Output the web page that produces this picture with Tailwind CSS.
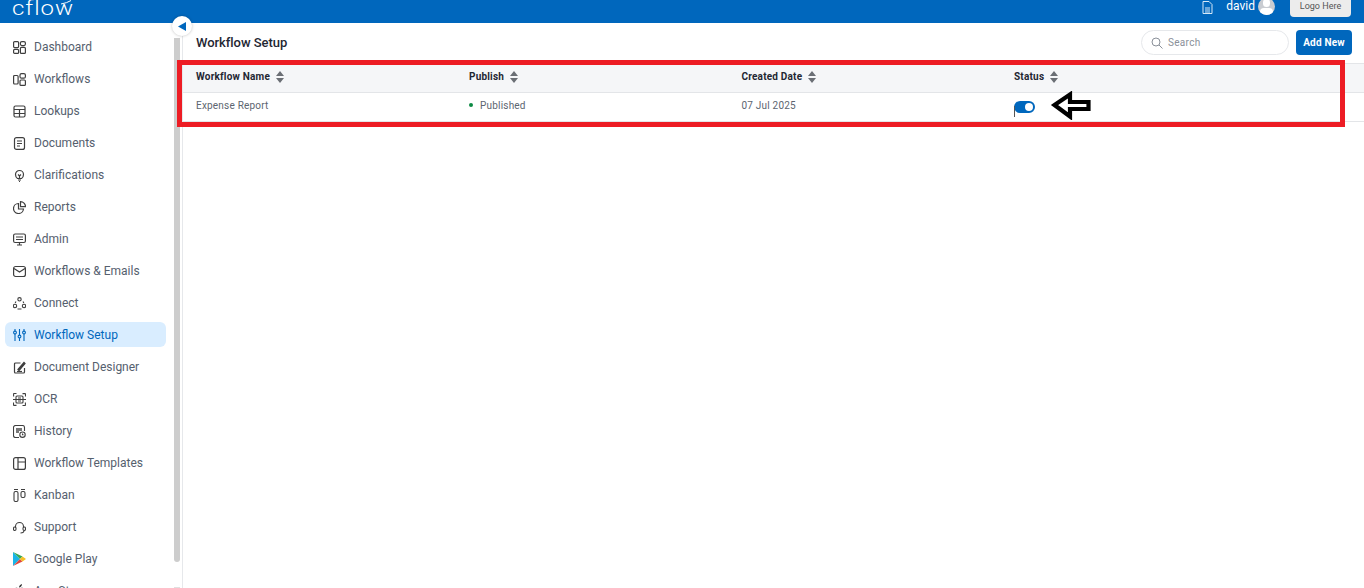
<!DOCTYPE html>
<html><head><meta charset="utf-8">
<script src="https://cdn.jsdelivr.net/npm/@tailwindcss/browser@4"></script>
</head>
<body class="m-0 bg-white">
<div class="relative w-[1364px] h-[588px] overflow-hidden bg-white font-['Roboto',sans-serif] flex flex-col">
  <header class="h-[23px] shrink-0 bg-[#0067bd] flex items-start overflow-hidden relative">
    <div class="ml-[12px] -mt-[2px] text-white text-[20px] leading-[20px] font-light tracking-[0.8px] scale-x-[1.2] origin-left">cflow</div>
    <svg class="absolute left-[60px] top-[0px]" width="12" height="5" viewBox="0 0 12 5" fill="none" stroke="#fff" stroke-width="1"><path d="M1 4 Q7 3 11 0.5"/></svg>
    <div class="ml-auto flex items-start">
      <svg class="mr-[13px] mt-[1px]" width="11" height="13" viewBox="0 0 11 13" fill="none" stroke="#d6e8f7" stroke-width="1"><path d="M1 .5h6l3 3v9H1z"/><path d="M3 7h5M3 9h5M3 11h5"/></svg>
      <div class="text-white text-[12px] leading-[13px] mr-[3px]">david</div>
      <div class="w-[17px] h-[17px] -mt-[2px] mr-[15px] rounded-full bg-[#c9ccd1] overflow-hidden relative">
        <div class="absolute left-[5px] top-[1px] w-[7px] h-[8px] rounded-full bg-white"></div>
        <div class="absolute left-[2px] top-[10px] w-[13px] h-[8px] rounded-full bg-white"></div>
      </div>
      <div class="w-[61px] h-[17px] mr-[13px] bg-[#ececec] rounded-b-[4px] text-[9px] leading-[13px] text-[#555] text-center">Logo Here</div>
    </div>
  </header>
  <div class="flex flex-1 min-h-0 relative">
    <aside class="w-[183px] shrink-0 border-r border-[#e6e8eb] relative overflow-hidden pt-[8px] pl-[5px]">
      <nav class="w-[161px] flex flex-col text-[12px] text-[#55606e]">
        <a class="h-[32px] flex items-center pl-[8px] gap-[8px]">
          <svg width="13" height="13" viewBox="0 0 13 13" fill="none" stroke="#3f3f3f" stroke-width="1.200"><rect x=".6" y=".6" width="5" height="6" rx="1"/><rect x="7.400" y=".6" width="5" height="4" rx="1.500"/><rect x=".6" y="8.400" width="5" height="4" rx="1"/><rect x="7.400" y="6.400" width="5" height="6" rx="1"/></svg>
          <span>Dashboard</span></a>
        <a class="h-[32px] flex items-center pl-[8px] gap-[8px]">
          <svg width="13" height="13" viewBox="0 0 13 13" fill="none" stroke="#3f3f3f" stroke-width="1.200"><rect x=".6" y="2.500" width="4.500" height="8.500" rx="1"/><rect x="7" y=".6" width="5.400" height="4.600" rx="1.500"/><rect x="7" y="7" width="5.400" height="5.400" rx="1"/></svg>
          <span>Workflows</span></a>
        <a class="h-[32px] flex items-center pl-[8px] gap-[8px]">
          <svg width="13" height="13" viewBox="0 0 13 13" fill="none" stroke="#3f3f3f" stroke-width="1.200"><rect x="1" y="1" width="11" height="11" rx="1.500"/><path d="M1 4.500h11M1 8.500h11M6.500 4.500v7.500"/></svg>
          <span>Lookups</span></a>
        <a class="h-[32px] flex items-center pl-[8px] gap-[8px]">
          <svg width="13" height="13" viewBox="0 0 13 13" fill="none" stroke="#3f3f3f" stroke-width="1.200"><rect x="1.500" y=".6" width="10" height="11.800" rx="2"/><path d="M4 4h5M4 6.500h5M4 9h3"/></svg>
          <span>Documents</span></a>
        <a class="h-[32px] flex items-center pl-[8px] gap-[8px]">
          <svg width="13" height="13" viewBox="0 0 13 13" fill="none" stroke="#3f3f3f" stroke-width="1.200"><path d="M4.500 9.500C3 8.500 2.500 7 2.500 5.500a4 4 0 0 1 8 0c0 1.500-.5 3-2 4z"/><path d="M5 11h3M6 12.500h1M5 5.500l1.500 1.500L8 5.500M6.500 7v2.500"/></svg>
          <span>Clarifications</span></a>
        <a class="h-[32px] flex items-center pl-[8px] gap-[8px]">
          <svg width="13" height="13" viewBox="0 0 13 13" fill="none" stroke="#3f3f3f" stroke-width="1.200"><path d="M5.500 2.500a5 5 0 1 0 5 5.500h-5z"/><path d="M7.500 .6a5 5 0 0 1 5 5h-5z"/></svg>
          <span>Reports</span></a>
        <a class="h-[32px] flex items-center pl-[8px] gap-[8px]">
          <svg width="13" height="13" viewBox="0 0 13 13" fill="none" stroke="#3f3f3f" stroke-width="1.200"><rect x=".6" y="1" width="11.800" height="8.500" rx="1.500"/><path d="M3 4h7M3 6.500h7M4 12h5M6.500 9.500V12"/></svg>
          <span>Admin</span></a>
        <a class="h-[32px] flex items-center pl-[8px] gap-[8px]">
          <svg width="13" height="13" viewBox="0 0 13 13" fill="none" stroke="#3f3f3f" stroke-width="1.200"><rect x=".6" y="1.500" width="11.800" height="10" rx="2"/><path d="M1 3.500l5.500 3.500L12 3.500"/></svg>
          <span>Workflows &amp; Emails</span></a>
        <a class="h-[32px] flex items-center pl-[8px] gap-[8px]">
          <svg width="13" height="13" viewBox="0 0 13 13" fill="none" stroke="#3f3f3f" stroke-width="1.100"><circle cx="6.500" cy="2.300" r="1.700"/><circle cx="2" cy="9" r="1.700"/><circle cx="11" cy="9" r="1.700"/><path d="M3 4.500l-.8 1.500M10 4.500l.8 1.500M4.500 12h4"/></svg>
          <span>Connect</span></a>
        <a class="h-[25px] mt-[3px] mb-[4px] flex items-center pl-[8px] gap-[8px] bg-[#d9edff] rounded-[6px] text-[#0067bd]">
          <svg width="13" height="13" viewBox="0 0 13 13" fill="none" stroke="#0067bd" stroke-width="1.100"><path d="M2 1v2M2 6v7M6.500 1v6M6.500 10v3M11 1v2M11 6v7"/><circle cx="2" cy="4.500" r="1.400"/><circle cx="6.500" cy="8.500" r="1.400"/><circle cx="11" cy="4.500" r="1.400"/></svg>
          <span>Workflow Setup</span></a>
        <a class="h-[32px] flex items-center pl-[8px] gap-[8px]">
          <svg width="13" height="13" viewBox="0 0 13 13" fill="none" stroke="#3f3f3f" stroke-width="1.200"><path d="M11.500 7v4a1 1 0 0 1-1 1h-8a1 1 0 0 1-1-1V3a1 1 0 0 1 1-1h5"/><path d="M5 8.500L11 1.500l1 1L6 9.500z" fill="#3f3f3f"/><path d="M4 10.500h5"/></svg>
          <span>Document Designer</span></a>
        <a class="h-[32px] flex items-center pl-[8px] gap-[8px]">
          <svg width="13" height="13" viewBox="0 0 13 13" fill="none" stroke="#3f3f3f" stroke-width="1.100"><path d="M.6 3.500V1a.5.5 0 0 1 .5-.5h2.400M9.500.6H12a.5.5 0 0 1 .5.5v2.400M12.400 9.500V12a.5.5 0 0 1-.5.5H9.500M3.500 12.400H1a.5.5 0 0 1-.5-.5V9.500"/><rect x="3" y="3" width="7" height="7" rx="1"/><path d="M0 6.500h13M5 5h3M5 8h3"/></svg>
          <span>OCR</span></a>
        <a class="h-[32px] flex items-center pl-[8px] gap-[8px]">
          <svg width="13" height="13" viewBox="0 0 13 13" fill="none" stroke="#3f3f3f" stroke-width="1.100"><path d="M6 12.500H2.500a2 2 0 0 1-2-2v-8a2 2 0 0 1 2-2h7a2 2 0 0 1 2 2V6"/><path d="M3 3h6v3H6v2H3z" fill="#777" stroke="none"/><circle cx="9.500" cy="9.700" r="2.700"/><path d="M9.500 8.500v1.300h1"/></svg>
          <span>History</span></a>
        <a class="h-[32px] flex items-center pl-[8px] gap-[8px]">
          <svg width="13" height="13" viewBox="0 0 13 13" fill="none" stroke="#3f3f3f" stroke-width="1.200"><rect x=".6" y=".6" width="11.800" height="11.800" rx="2"/><path d="M5 .6v11.800M5 5h7.400"/></svg>
          <span>Workflow Templates</span></a>
        <a class="h-[32px] flex items-center pl-[8px] gap-[8px]">
          <svg width="13" height="13" viewBox="0 0 13 13" fill="none" stroke="#3f3f3f" stroke-width="1.100"><path d="M1 .5h4M8 .5h4"/><rect x="1" y="2.500" width="4" height="10" rx="1.500"/><rect x="8" y="2.500" width="4" height="6" rx="1.500"/></svg>
          <span>Kanban</span></a>
        <a class="h-[32px] flex items-center pl-[8px] gap-[8px]">
          <svg width="13" height="13" viewBox="0 0 13 13" fill="none" stroke="#3f3f3f" stroke-width="1.100"><path d="M2.500 6.500V5.500a4 4 0 0 1 8 0v1"/><rect x=".5" y="6" width="2.500" height="3.500" rx="1.200"/><rect x="10" y="6" width="2.500" height="3.500" rx="1.200"/><path d="M11 9.500c0 1.500-1.500 2.500-3.500 2.500"/></svg>
          <span>Support</span></a>
        <a class="h-[32px] flex items-center pl-[8px] gap-[8px]">
          <svg width="13" height="14" viewBox="0 0 13 14"><path d="M0 0v14l7-7z" fill="#19b5e8"/><path d="M0 0l7 7 2.500-2.500z" fill="#36a853"/><path d="M0 14l7-7 2.500 2.500z" fill="#e0483e"/><path d="M9.500 4.500L13 7l-3.500 2.500L7 7z" fill="#f6c026"/></svg>
          <span>Google Play</span></a>
        <a class="h-[32px] flex items-center pl-[8px] gap-[8px]">
          <svg width="13" height="14" viewBox="0 0 13 14" fill="#333"><path d="M9 0C9 2 7.500 3.500 6 3.500 6 2 7.500.3 9 0zM6 4.500c1 0 1.500-.7 3-.7 1.200 0 2.300.6 3 1.700-2.500 1.500-2 5 .7 6-.8 1.500-2 3-3.200 3-1 0-1.500-.7-2.700-.7-1.300 0-1.800.7-2.800.7C2 14.500 0 10.500 0 8c0-2.500 1.800-4.200 3.500-4.200 1 0 1.700.7 2.500.7z"/></svg>
          <span>App Store</span></a>
      </nav>
      <div class="absolute left-[174px] top-[15px] w-[6px] h-[524px] bg-[#cdcdcd] rounded-b-[3px]"></div>
      <div class="absolute left-[174px] top-[564px] w-[6px] h-[4px] bg-[#e0e0e0]"></div>
    </aside>
    <main class="flex-1 min-w-0">
      <div class="h-[40px] pl-[13px] pr-[12px] flex items-center">
        <h1 class="text-[13px] font-medium text-[#1f2733] -mt-[1px] tracking-[-0.05px]">Workflow Setup</h1>
        <div class="ml-auto w-[148px] h-[25px] -mt-[1px] border border-[#e6e8eb] rounded-full flex items-center pl-[9px] gap-[5px]">
          <svg width="12" height="12" viewBox="0 0 12 12" fill="none" stroke="#8a9099" stroke-width="1"><circle cx="5" cy="5" r="4"/><path d="M8 8l3.500 3.500"/></svg>
          <span class="text-[10px] text-[#8a9099] tracking-[0.3px]">Search</span>
        </div>
        <button class="ml-[7px] w-[56px] h-[25px] -mt-[1px] bg-[#0067bd] rounded-[4px] text-white text-[10px] font-bold tracking-[0.2px]">Add New</button>
      </div>
      <table class="w-full table-fixed border-collapse text-[10px] tracking-[0.2px]">
        <thead>
          <tr class="h-[29px] bg-[#f5f6f8] border-y border-[#e3e5e8] text-left text-[#1f2733]">
            <th class="w-[286px] pl-[13px] pb-[3px] font-bold"><span class="inline-flex items-center gap-[6px]">Workflow Name<svg width="8" height="12" viewBox="0 0 8 12" fill="#6b6f75"><path d="M4 0l4 5H0zM4 12l4-5H0z"/></svg></span></th>
            <th class="w-[272.500px] pb-[3px] font-bold"><span class="inline-flex items-center gap-[6px]">Publish<svg width="8" height="12" viewBox="0 0 8 12" fill="#6b6f75"><path d="M4 0l4 5H0zM4 12l4-5H0z"/></svg></span></th>
            <th class="w-[272.500px] pb-[3px] font-bold"><span class="inline-flex items-center gap-[6px]">Created Date<svg width="8" height="12" viewBox="0 0 8 12" fill="#6b6f75"><path d="M4 0l4 5H0zM4 12l4-5H0z"/></svg></span></th>
            <th class="pb-[3px] font-bold"><span class="inline-flex items-center gap-[6px]">Status<svg width="8" height="12" viewBox="0 0 8 12" fill="#6b6f75"><path d="M4 0l4 5H0zM4 12l4-5H0z"/></svg></span></th>
          </tr>
        </thead>
        <tbody>
          <tr class="h-[29px] border-b border-[#e3e5e8] text-[#5c6570]">
            <td class="pl-[13px] pb-[3px]">Expense Report</td>
            <td class="pb-[5px]"><span class="inline-flex items-center gap-[7px]"><span class="w-[4px] h-[4px] rounded-full bg-[#0c8a43]"></span>Published</span></td>
            <td class="pb-[3px]">07 Jul 2025</td>
            <td class="pb-[3px]"><span class="block relative w-[21px] h-[12px] mt-[2px] rounded-full bg-[#0067bd]"><span class="absolute right-[2px] top-[2px] w-[8px] h-[8px] rounded-full bg-white"></span><span class="absolute left-0 top-[5px] w-px h-[11px] bg-[#555]"></span></span></td>
          </tr>
        </tbody>
      </table>
    </main>
    <button class="absolute left-[172px] -top-[7px] w-[20px] h-[20px] rounded-full bg-white shadow-[0_0_3px_rgba(0,0,0,0.25)] flex items-center justify-center">
      <svg width="9" height="9" viewBox="0 0 9 9" fill="#0067bd"><path d="M0 4.500L8 0v9z"/></svg>
    </button>
  </div>
  <div class="absolute left-[177px] top-[60px] w-[1168px] h-[67px] border-[5px] border-[#ed1c24]"></div>
  <svg class="absolute left-[1050px] top-[91px]" width="42" height="29" viewBox="0 0 42 29" fill="#fff" stroke="#000" stroke-width="4.200"><path d="M4.500 14L20 3.500V11h18.500v7H20v7.500z"/></svg>
</div>
</body></html>
